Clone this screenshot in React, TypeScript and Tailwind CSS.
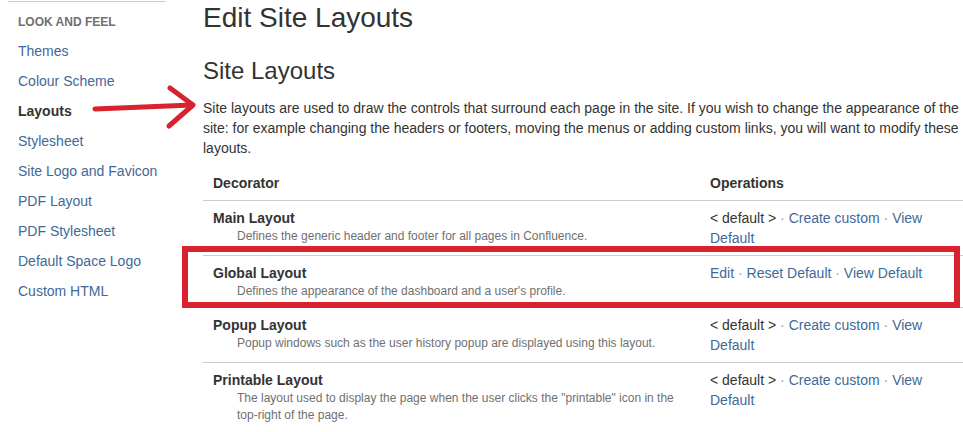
import React from 'react';

const navItems = [
  'Themes',
  'Colour Scheme',
  'Layouts',
  'Stylesheet',
  'Site Logo and Favicon',
  'PDF Layout',
  'PDF Stylesheet',
  'Default Space Logo',
  'Custom HTML',
];

type Row = {
  name: string;
  desc: string;
  custom?: boolean;
};

const rows: Row[] = [
  { name: 'Main Layout', desc: 'Defines the generic header and footer for all pages in Confluence.' },
  { name: 'Global Layout', desc: "Defines the appearance of the dashboard and a user's profile.", custom: true },
  { name: 'Popup Layout', desc: 'Popup windows such as the user history popup are displayed using this layout.' },
  {
    name: 'Printable Layout',
    desc: 'The layout used to display the page when the user clicks the "printable" icon in the top-right of the page.',
  },
];

const link = 'text-[#41699a]';

function Dot() {
  return <span className="text-[#999]">·</span>;
}

function Operations({ custom }: { custom?: boolean }) {
  if (custom) {
    return (
      <>
        <a className={link}>Edit</a> <Dot /> <a className={link}>Reset Default</a> <Dot />{' '}
        <a className={link}>View Default</a>
      </>
    );
  }
  return (
    <>
      <span className="text-[#333]">&lt; default &gt;</span> <Dot /> <a className={link}>Create custom</a> <Dot />{' '}
      <a className={link}>View</a> <a className={link}>Default</a>
    </>
  );
}

export default function App() {
  return (
    <div className="relative w-[963px] h-[432px] overflow-hidden bg-white font-['Liberation_Sans',Arial,sans-serif] text-[#333]">
      <div className="flex items-start">
        {/* Sidebar */}
        <aside className="ml-[8px] mt-[1px] w-[158px] shrink-0 border-t border-[#ccc]">
          <div className="px-[10px] pt-[12px] mb-[6px] text-[12px] leading-[16px] font-bold text-[#707070]">
            LOOK AND FEEL
          </div>
          <ul>
            {navItems.map((item) => (
              <li
                key={item}
                className={
                  item === 'Layouts'
                    ? 'pl-[10px] py-[5px] whitespace-nowrap text-[14px] leading-[20px] font-bold text-[#333]'
                    : 'pl-[10px] py-[5px] whitespace-nowrap text-[14px] leading-[20px] text-[#41699a]'
                }
              >
                {item}
              </li>
            ))}
          </ul>
        </aside>

        {/* Main content */}
        <main className="ml-[37px] w-[770px] shrink-0">
          <h1 className="mt-[1px] text-[28px] leading-[34px] font-normal text-[#333]">Edit Site Layouts</h1>
          <h2 className="mt-[21px] text-[24px] leading-[30px] font-normal text-[#333]">Site Layouts</h2>
          <p className="mt-[12px] text-[14px] leading-[20px] text-[#333]">
            Site layouts are used to draw the controls that surround each page in the site. If you wish to change the
            appearance of the site: for example changing the headers or footers, moving the menus or adding custom
            links, you will want to modify these layouts.
          </p>

          <table className="mt-[8px] w-full border-collapse text-[14px] leading-[20px]">
            <thead>
              <tr className="border-b border-[#ccc]">
                <th className="w-[497px] px-[10px] py-[7px] text-left font-bold">Decorator</th>
                <th className="px-[10px] py-[7px] text-left font-bold">Operations</th>
              </tr>
            </thead>
            <tbody>
              {rows.map((row) => (
                <tr key={row.name} className="border-b border-[#ccc] last:border-b-0 align-top">
                  <td className="px-[10px] py-[7px]">
                    <div className="font-bold text-[#333]">{row.name}</div>
                    <div className="pl-[24px] text-[12px] leading-[17px] text-[#707070]">{row.desc}</div>
                  </td>
                  <td className="px-[10px] py-[7px]">
                    <Operations custom={row.custom} />
                  </td>
                </tr>
              ))}
            </tbody>
          </table>
        </main>
      </div>

      {/* Annotation: arrow */}
      <svg className="absolute left-0 top-0 pointer-events-none" width="963" height="432">
        <g fill="none" stroke="#d8232f" strokeWidth="5" strokeLinecap="round" strokeLinejoin="round">
          <path d="M95 109 L192 105" />
          <path d="M170 88 L193 105 L169 126" />
        </g>
      </svg>

      {/* Annotation: highlight box */}
      <div className="absolute left-[182px] top-[246px] w-[778px] h-[62px] border-[6px] border-[#d8232f] pointer-events-none" />
    </div>
  );
}
